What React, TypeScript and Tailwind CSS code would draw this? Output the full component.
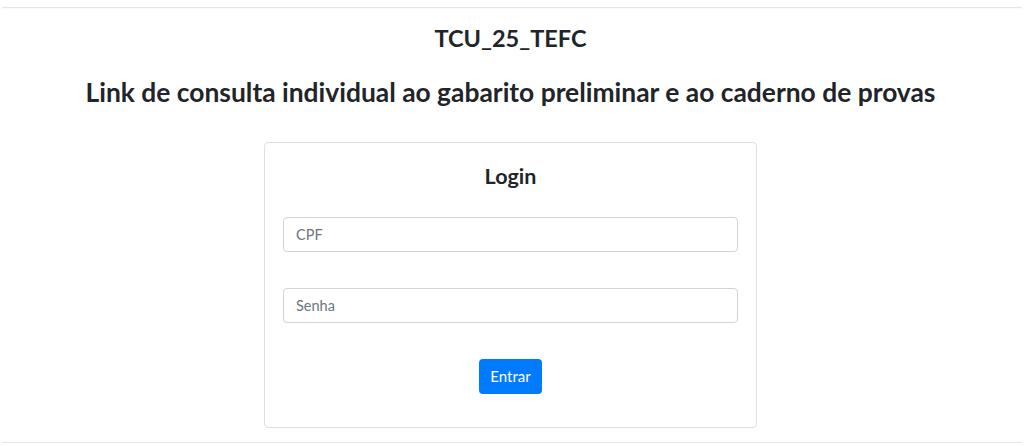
export default function App() {
  return (
    <div className="min-h-screen bg-white font-['Lato',sans-serif] text-[#212529]">
      <div className="px-[2px] pt-[7px]">
        <div className="border-t border-[#e5e5e5] shadow-[0_1px_1px_rgba(0,0,0,0.03)]" />
        <div className="flex flex-col items-center pr-[3px]">
          <h4 className="mt-[16px] text-[23.5px] leading-[29px] font-bold">TCU_25_TEFC</h4>
          <h3 className="mt-[22px] text-[26.4px] leading-[34px] font-bold">
            Link de consulta individual ao gabarito preliminar e ao caderno de provas
          </h3>
          <div className="mt-[33px] w-[493px] rounded-[4px] border border-[#dfdfdf] px-[18px] pt-[18px] pb-[33px]">
            <h5 className="text-center text-[21.5px] leading-[30px] font-bold">Login</h5>
            <input
              type="text"
              placeholder="CPF"
              className="mt-[26px] block h-[35px] w-full rounded-[4px] border border-[#ced4da] px-[12px] text-[14.5px] placeholder:text-[#6c757d] outline-none"
            />
            <input
              type="password"
              placeholder="Senha"
              className="mt-[36px] block h-[35px] w-full rounded-[4px] border border-[#ced4da] px-[12px] text-[14.5px] placeholder:text-[#6c757d] outline-none"
            />
            <div className="mt-[36px] flex justify-center">
              <button className="h-[35px] w-[63px] rounded-[4px] bg-[#007bff] text-[15px] text-white">
                Entrar
              </button>
            </div>
          </div>
        </div>
        <div className="mt-[14px] border-t border-[#e5e5e5]" />
      </div>
    </div>
  );
}
